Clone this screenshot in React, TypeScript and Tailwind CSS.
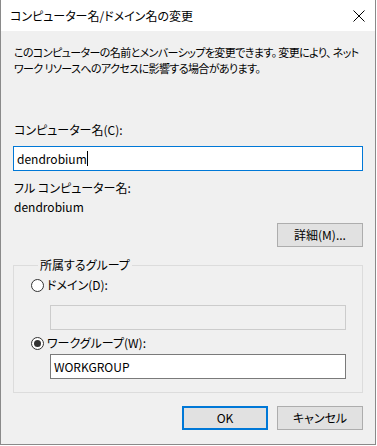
import React, { useState } from "react";

const FONT = "font-['Noto_Sans_CJK_JP','Noto_Sans',sans-serif] [font-feature-settings:'palt'] text-[12px] leading-[16px] text-black";

// Windows-style radio button
function Radio({ checked, label, onClick }: { checked: boolean; label: string; onClick: () => void }) {
  return (
    <button onClick={onClick} className="flex items-center h-[16px] text-left">
      <span className="w-[13px] h-[13px] rounded-full border border-[#333] bg-white flex items-center justify-center">
        {checked && <span className="w-[7px] h-[7px] rounded-full bg-[#333]" />}
      </span>
      <span className="ml-[3px]">{label}</span>
    </button>
  );
}

export default function App() {
  const [name, setName] = useState("dendrobium");
  const [mode, setMode] = useState<"domain" | "workgroup">("workgroup");

  return (
    <div className={`${FONT} w-[376px] h-[445px] bg-[#f0f0f0] border-x border-b border-[#8a8a8a] flex flex-col`}>
      {/* Title bar */}
      <div className="h-[31px] bg-white flex items-center justify-between pl-[9px] pr-[9px] shrink-0">
        <span className="whitespace-nowrap">コンピューター名/ドメイン名の変更</span>
        <svg width="12" height="12" viewBox="0 0 12 12" className="mr-[1px]">
          <path d="M0.5 0.5 L11.5 11.5 M11.5 0.5 L0.5 11.5" stroke="#000" strokeWidth="1" fill="none" />
        </svg>
      </div>

      <div className="px-[12px] flex flex-col">
        <p className="mt-[13px] ml-[1px] whitespace-nowrap text-[11px] tracking-[-0.6px]">
          このコンピューターの名前とメンバーシップを変更できます。 変更により、 ネット
          <br />
          ワーク リソースへのアクセスに影響する場合があります。
        </p>

        <div className="mt-[46px] ml-[1px]">コンピューター名(C):</div>
        <div className="mt-[8px] h-[25px] border border-[#0078d7] bg-white flex items-center px-[3px]">
          <span>{name}</span>
          <span className="w-[1px] h-[15px] bg-black" />
        </div>

        <div className="mt-[9px] ml-[1px]">フル コンピューター名:</div>
        <div className="mt-[3px] ml-[1px]">{name}</div>

        <div className="mt-[8px] flex justify-end">
          <button
            onClick={() => setName(name)}
            className="w-[86px] h-[24px] bg-[#e1e1e1] border border-[#adadad]">
            詳細(M)...
          </button>
        </div>

        {/* Group box */}
        <fieldset className="mt-[10px] border border-[#dcdcdc] pl-[17px] pb-[13px]">
          <legend className="ml-[7px] px-[2px]">所属するグループ</legend>
          <div className="mt-[4px]">
            <Radio checked={mode === "domain"} label="ドメイン(D):" onClick={() => setMode("domain")} />
          </div>
          <div className="mt-[12px] ml-[19px] w-[296px] h-[25px] border border-[#cccccc] bg-[#f0f0f0]" />
          <div className="mt-[5px]">
            <Radio checked={mode === "workgroup"} label="ワークグループ(W):" onClick={() => setMode("workgroup")} />
          </div>
          <div className="mt-[3px] ml-[19px] w-[296px] h-[25px] border border-[#7a7a7a] bg-white flex items-center px-[3px]">
            WORKGROUP
          </div>
        </fieldset>

        {/* Footer buttons */}
        <div className="mt-[13px] flex justify-end gap-[9px]">
          <button className="w-[86px] h-[24px] bg-[#e1e1e1] border-2 border-[#0078d7]">OK</button>
          <button className="w-[86px] h-[24px] bg-[#e1e1e1] border border-[#adadad]">キャンセル</button>
        </div>
      </div>
    </div>
  );
}
